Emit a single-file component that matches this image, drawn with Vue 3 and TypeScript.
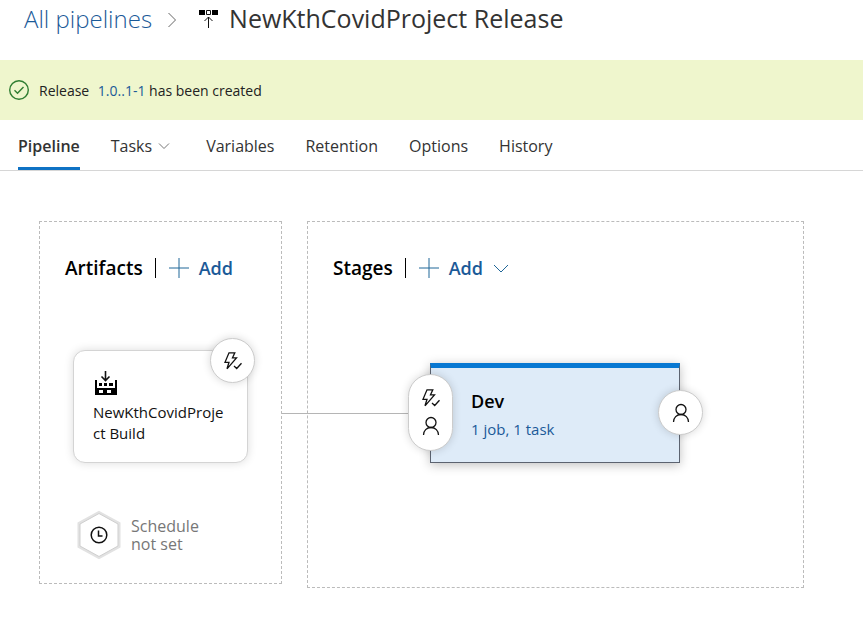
<script setup lang="ts">
import { ref } from 'vue'

interface Tab {
  label: string
  menu?: boolean
}

const project = 'NewKthCovidProject'
const tabs: Tab[] = [
  { label: 'Pipeline' },
  { label: 'Tasks', menu: true },
  { label: 'Variables' },
  { label: 'Retention' },
  { label: 'Options' },
  { label: 'History' },
]
const active = ref('Pipeline')
</script>

<template>
  <div class="page">
    <header class="crumbs">
      <a class="crumb-link" href="#">All pipelines</a>
      <svg class="crumb-sep" width="10" height="18" viewBox="0 0 10 18"><path d="M1.5 2 8.500 9l-7 7" /></svg>
      <svg class="release-icon" width="20" height="20" viewBox="0 0 20 20">
        <path class="solid" d="M0 0h6v5H0zM13 0h6v5h-6z" />
        <path d="M7.5.5h4v4h-4zM9.500 18v-11M5.500 11l4-4 4 4" />
      </svg>
      <h1>{{ project }} Release</h1>
    </header>

    <div class="notice" role="status">
      <svg width="20" height="20" viewBox="0 0 20 20"><circle cx="10" cy="10" r="9.300" /><path d="m5.500 10.300 3 3 6-6.300" /></svg>
      <p>Release <a href="#">1.0..1-1</a> has been created</p>
    </div>

    <nav class="tabs">
      <button
        v-for="tab in tabs"
        :key="tab.label"
        type="button"
        :class="['tab', { active: active === tab.label }]"
        @click="active = tab.label"
      >
        {{ tab.label }}
        <svg v-if="tab.menu" width="12" height="8" viewBox="0 0 12 8"><path d="m1 1.500 5 5 5-5" /></svg>
      </button>
    </nav>

    <main class="canvas">
      <section class="panel artifacts">
        <div class="panel-head">
          <h2>Artifacts</h2>
          <button type="button" class="add">
            <svg width="20" height="20" viewBox="0 0 20 20"><path d="M10 0v20M0 10h20" /></svg>
            Add
          </button>
        </div>
        <div class="artifact">
          <svg class="build-icon" width="22" height="25" viewBox="0 0 22 25">
            <path class="solid" fill-rule="evenodd" d="M0 9h2v8h18V9h2v15H0zM4 19v3h4v-3zM12 19v3h4v-3zM4 12h3v3H4zM9 12h3v3H9zM14 12h4v3h-4z" />
            <path class="arrow" d="M10.500 0v9.500M6.500 5.500l4 4 4-4" />
          </svg>
          <p>{{ project }} Build</p>
          <button type="button" class="badge trigger" aria-label="Continuous deployment trigger">
            <svg width="18" height="18" viewBox="0 0 18 18"><path d="M5 .8h5.800L8.500 5.800h4L3 16.800l2-6.500H1zM10 14l2.700 2.500 4.800-5.300" /></svg>
          </button>
        </div>
        <div class="schedule">
          <button type="button" class="hex" aria-label="Schedule">
            <svg width="44" height="50" viewBox="0 0 44 50">
              <path class="hex-outer" d="M22 2.500 42 13.500v23L22 47.500 2 36.500v-23z" />
              <path class="hex-inner" d="M22 3.500 41 14v22L22 46.500 3 36V14z" />
              <circle cx="22" cy="25" r="7.800" />
              <path class="hands" d="M21.500 20.500v5.500h4" />
            </svg>
          </button>
          <span>Schedule<br />not set</span>
        </div>
      </section>

      <section class="panel stages">
        <div class="panel-head">
          <h2>Stages</h2>
          <button type="button" class="add">
            <svg width="20" height="20" viewBox="0 0 20 20"><path d="M10 0v20M0 10h20" /></svg>
            Add
            <svg width="16" height="9" viewBox="0 0 16 9"><path d="m1 1 7 7 7-7" /></svg>
          </button>
        </div>
        <div class="stage-row">
          <span class="connector"></span>
          <article class="stage">
            <h3>Dev</h3>
            <a href="#">1 job, 1 task</a>
            <button type="button" class="badge pre" aria-label="Pre-deployment conditions">
              <svg width="18" height="18" viewBox="0 0 18 18"><path d="M5 .8h5.800L8.500 5.800h4L3 16.800l2-6.500H1zM10 14l2.700 2.500 4.800-5.300" /></svg>
              <svg width="18" height="20" viewBox="0 0 18 20"><circle cx="9" cy="6.500" r="5" /><path d="M1.500 19c0-4.300 3.200-7.500 7.500-7.500s7.500 3.200 7.500 7.500" /></svg>
            </button>
            <button type="button" class="badge post" aria-label="Post-deployment conditions">
              <svg width="18" height="20" viewBox="0 0 18 20"><circle cx="9" cy="6.500" r="5" /><path d="M1.500 19c0-4.300 3.200-7.500 7.500-7.500s7.500 3.200 7.500 7.500" /></svg>
            </button>
          </article>
        </div>
      </section>
    </main>
  </div>
</template>

<style>
body {
  margin: 0;
  background: #fff;
}
</style>

<style scoped>
.page {
  font-family: 'Open Sans', 'Noto Sans', sans-serif;
  font-size: 14px;
  color: #222;
}
h1, h2, h3, p {
  margin: 0;
}
a {
  color: #1b5a98;
  text-decoration: none;
}
button {
  font: inherit;
  color: inherit;
  background: none;
  border: 0;
  padding: 0;
  cursor: pointer;
}
svg {
  display: block;
  flex: none;
  fill: none;
  stroke: #111;
}
.solid {
  fill: #000;
  stroke: none;
}
.crumbs {
  display: flex;
  align-items: center;
  height: 36px;
  padding: 0 24px 24px;
  white-space: nowrap;
}
.crumbs svg {
  margin-top: 4px;
}
.crumb-link {
  font-size: 24px;
  font-weight: 300;
}
.crumb-sep {
  margin-left: 15px;
  stroke: #666;
}
.release-icon {
  margin: 0 10px 0 22px;
}
h1 {
  font-size: 25px;
  font-weight: 400;
  color: #333;
}
.notice {
  display: flex;
  align-items: center;
  gap: 10px;
  height: 60px;
  padding: 0 9px;
  background: #eff6cd;
}
.notice svg {
  stroke: #2f7d32;
  stroke-width: 1.400;
}
.notice a {
  margin-left: 5px;
}
.tabs {
  display: flex;
  gap: 31px;
  height: 50px;
  padding: 0 18px;
  border-bottom: 1px solid #d6d6d6;
}
.tab {
  display: flex;
  align-items: center;
  gap: 6px;
  padding-top: 4px;
  border-bottom: 3px solid transparent;
  font-size: 16px;
  color: #333;
}
.tab svg {
  margin-right: 5px;
  stroke: #777;
}
.tab.active {
  border-color: #0f72c4;
  font-weight: 600;
}
.canvas {
  display: flex;
  align-items: flex-start;
  gap: 25px;
  padding: 50px 59px 40px 39px;
}
.panel {
  box-sizing: border-box;
  border: 1px dashed #bbb;
}
.artifacts {
  flex: none;
  width: 243px;
  padding-bottom: 23px;
}
.stages {
  flex: 1;
  min-width: 400px;
  padding-bottom: 124px;
}
.panel-head {
  display: flex;
  align-items: center;
  height: 28px;
  padding: 32px 25px 0;
}
h2, h3, .add {
  font-size: 18px;
  font-weight: 600;
}
h2, h3 {
  color: #000;
}
h2 {
  font-size: 19px;
}
.add {
  display: flex;
  align-items: center;
  gap: 10px;
  height: 20px;
  margin-left: 12px;
  padding-left: 13px;
  border-left: 1px solid #000;
  color: #1b5a98;
}
.add svg {
  stroke: #1f6698;
}
.artifact {
  position: relative;
  box-sizing: border-box;
  width: 175px;
  min-height: 113px;
  margin: 68px 0 0 33px;
  padding: 20px 19px 18px;
  border: 1px solid #d4d4d4;
  border-radius: 12px;
  background: #fff;
  box-shadow: 0 0 10px rgba(0, 0, 0, 0.14);
}
.build-icon {
  margin-left: 2px;
}
.artifact p {
  margin-top: 6px;
  font-size: 15px;
  line-height: 21px;
  word-break: break-all;
  color: #111;
}
.arrow {
  stroke-width: 1.600;
}
.badge {
  position: absolute;
  display: flex;
  flex-direction: column;
  align-items: center;
  justify-content: center;
  gap: 9px;
  box-sizing: border-box;
  width: 45px;
  height: 45px;
  border: 1px solid #ccc;
  border-radius: 23px;
  background: #fff;
  box-shadow: 0 0 8px rgba(0, 0, 0, 0.16);
}
.badge svg {
  stroke-width: 1.300;
}
.trigger {
  top: -13px;
  right: -8px;
}
.schedule {
  display: flex;
  align-items: center;
  gap: 10px;
  margin: 47px 0 0 37px;
  font-size: 16px;
  line-height: 18px;
  color: #777;
}
.hex-outer {
  stroke: #e2e2e2;
  stroke-width: 3;
}
.hex-inner {
  fill: #fff;
  stroke: #cfcfcf;
}
.hex circle, .hands {
  stroke-width: 1.500;
}
.stage-row {
  display: flex;
  align-items: center;
  margin: 81px 0 0 -26px;
}
.connector {
  width: 148px;
  height: 1px;
  background: #b5b5b5;
}
.stage {
  position: relative;
  box-sizing: border-box;
  width: 250px;
  height: 100px;
  padding: 20px 40px;
  border: 1px solid #5c6370;
  border-top: 5px solid #0878d2;
  background: #deebf8;
  box-shadow: 0 2px 10px rgba(0, 0, 0, 0.25);
}
h3 {
  line-height: 26px;
}
.stage a {
  display: block;
  margin-top: 5px;
  font-size: 15px;
  line-height: 20px;
}
.pre {
  top: 6px;
  left: -23px;
  height: 77px;
}
.post {
  top: 22px;
  right: -24px;
}
</style>
